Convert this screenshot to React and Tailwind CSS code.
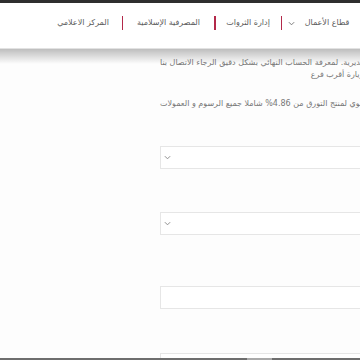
import React from 'react'

const FONT = { fontFamily: '"DejaVu Sans", "Noto Sans", sans-serif' }

function Chevron({ className }) {
  return (
    <svg viewBox="0 0 8 5" className={className} fill="none" stroke="currentColor" strokeWidth="1.1">
      <path d="M1 1l3 3 3-3" />
    </svg>
  )
}

function Sep() {
  return <span className="w-[1.5px] h-[14px] bg-[#b3294a] mx-[12px]" />
}

function NavItem({ w, children }) {
  return <span className={`${w} whitespace-nowrap flex justify-center`}>{children}</span>
}

function SelectBox({ chevron }) {
  return (
    <div className="h-[23px] w-[240px] bg-white border border-[#e6e6e6] flex items-center pl-[3px]">
      {chevron && <Chevron className="w-[7px] h-[5px] text-[#8a8a8a]" />}
    </div>
  )
}

export default function App() {
  return (
    <div className="relative w-[360px] h-[360px] overflow-hidden bg-[#fdfdfd]" style={FONT}>
      <div className="h-[3px] bg-[#2e2e2e]" />
      <nav dir="rtl" className="h-[46px] bg-white border-b border-[#e2e2e2] flex items-start pt-[13px] pr-[11px] text-[8px] text-[#5a5a5a]">
        <div className="flex items-center h-[14px]">
          <NavItem w="w-[44px]">قطاع الأعمال</NavItem>
          <Chevron className="w-[7px] h-[5px] mr-[10px] text-[#777]" />
          <span className="w-[6px]" />
          <span className="w-[1.5px] h-[14px] bg-[#b3294a] ml-[12px]" />
          <NavItem w="w-[41px]">إدارة الثروات</NavItem>
          <Sep />
          <NavItem w="w-[67px]">المصرفية الإسلامية</NavItem>
          <Sep />
          <NavItem w="w-[53px]">المركز الاعلامي</NavItem>
        </div>
      </nav>
      <div className="absolute top-[49px] left-0 right-0 h-[15px] bg-linear-to-b from-black/25 to-transparent pointer-events-none" />

      <div className="pl-[160px] pt-[8px]">
        <div dir="rtl" className="w-[212px] text-[8px] leading-[12px] text-[#777]">
          <div className="flex justify-end whitespace-nowrap">
            <span>الأسعار تقديرية. لمعرفة الحساب النهائي بشكل دقيق الرجاء الاتصال بنا</span>
          </div>
          <div className="whitespace-nowrap">أو زيارة أقرب فرع</div>
          <div className="flex justify-end whitespace-nowrap mt-[17px]">
            <span>معدل الربح السنوي لمنتج التورق من 4.86% شاملا جميع الرسوم و العمولات</span>
          </div>
        </div>
        <div className="flex flex-col">
          <div className="mt-[36px]"><SelectBox chevron /></div>
          <div className="mt-[43px]"><SelectBox chevron /></div>
          <div className="mt-[51px]"><SelectBox /></div>
          <div className="mt-[44px]"><SelectBox /></div>
        </div>
      </div>

      <div className="absolute bottom-0 left-0 right-0 h-[2px] bg-[#6e6e6e]">
        <div className="ml-[247px] w-[25px] h-full bg-[#a9a9a9]" />
      </div>
    </div>
  )
}
